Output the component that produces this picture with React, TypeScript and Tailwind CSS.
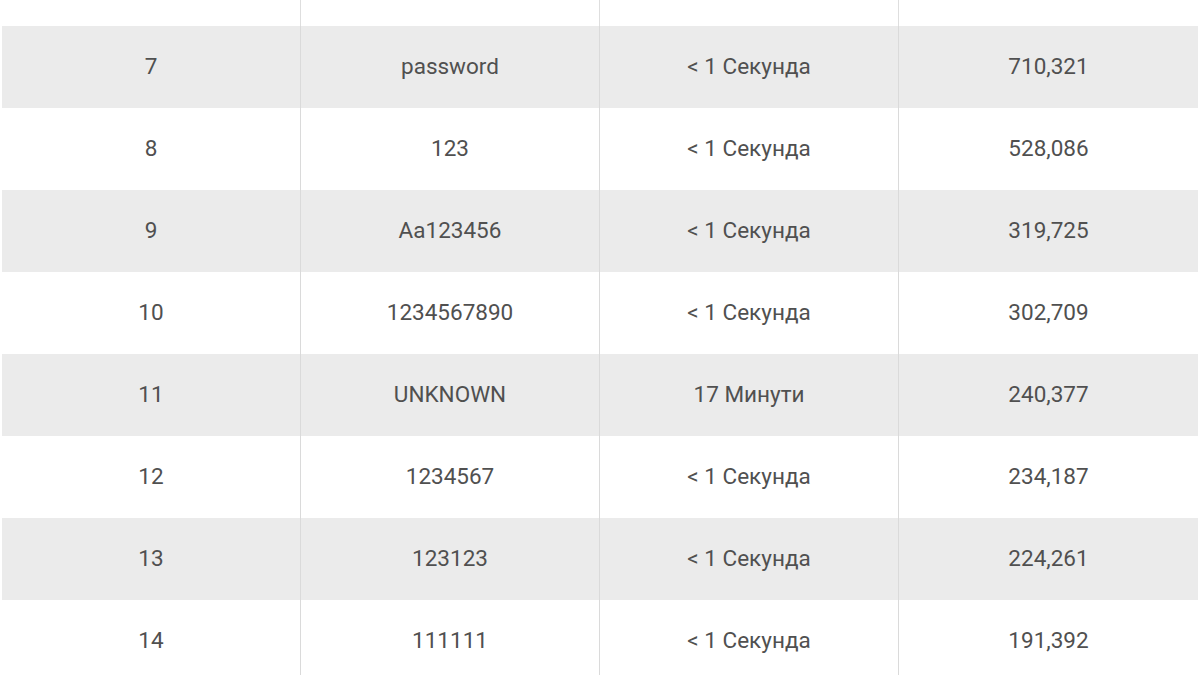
import React from "react";

interface Row {
  rank: number;
  password: string;
  time: string;
  count: string;
}

const rows: Row[] = [
  { rank: 7, password: "password", time: "< 1 Секунда", count: "710,321" },
  { rank: 8, password: "123", time: "< 1 Секунда", count: "528,086" },
  { rank: 9, password: "Aa123456", time: "< 1 Секунда", count: "319,725" },
  { rank: 10, password: "1234567890", time: "< 1 Секунда", count: "302,709" },
  { rank: 11, password: "UNKNOWN", time: "17 Минути", count: "240,377" },
  { rank: 12, password: "1234567", time: "< 1 Секунда", count: "234,187" },
  { rank: 13, password: "123123", time: "< 1 Секунда", count: "224,261" },
  { rank: 14, password: "111111", time: "< 1 Секунда", count: "191,392" },
];

export default function App() {
  return (
    <div
      className="w-[1200px] h-[675px] overflow-hidden bg-white px-[2px] text-[22.5px] text-[#505050]"
      style={{ fontFamily: "Roboto, 'Liberation Sans', sans-serif" }}>
      {/* tail of the previous row */}
      <div className="grid grid-cols-4 h-[26px]">
        <div className="border-r border-[#dedede]" />
        <div className="border-r border-[#dedede]" />
        <div className="border-r border-[#dedede]" />
        <div />
      </div>
      {rows.map((row, i) => (
        <div
          key={row.rank}
          className={`grid grid-cols-4 h-[82px] ${i % 2 === 0 ? "bg-[#ebebeb]" : "bg-white"}`}>
          <div className="flex items-center justify-center border-r border-[#dadada]">
            {row.rank}
          </div>
          <div className="flex items-center justify-center border-r border-[#dadada]">
            {row.password}
          </div>
          <div className="flex items-center justify-center border-r border-[#dadada]">
            {row.time}
          </div>
          <div className="flex items-center justify-center">{row.count}</div>
        </div>
      ))}
    </div>
  );
}
